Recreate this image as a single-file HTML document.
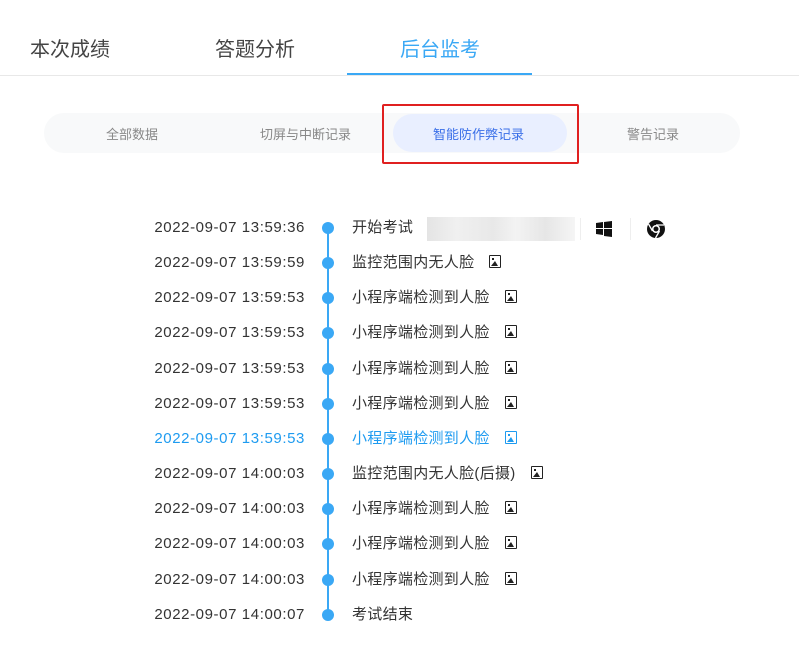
<!DOCTYPE html>
<html><head><meta charset="utf-8"><style>
body{margin:0;width:799px;height:646px;background:#fff;font-family:"Liberation Sans","Noto Sans CJK SC",sans-serif;position:relative;overflow:hidden}
.abs{position:absolute}
.tab{position:absolute;top:36px;font-size:20px;color:#444;line-height:28px}
.row{position:absolute;left:0;width:799px;height:20px;font-size:15px;color:#333;line-height:20px}
.row .t{position:absolute;right:494px;letter-spacing:0.6px}
.row .d{position:absolute;left:322px;top:4px;width:12px;height:12px;border-radius:50%;background:#3aa8f5}
.row .e{position:absolute;left:352px;letter-spacing:0.3px}
.ic{display:inline-block;width:12px;height:13px;border:1.5px solid #222;border-radius:1px;margin-left:15px;vertical-align:-1px;position:relative;box-sizing:border-box}
.ic:after{content:"";position:absolute;left:1px;bottom:1px;width:0;height:0;border-left:4px solid transparent;border-right:3px solid transparent;border-bottom:5px solid #222}
.ic:before{content:"";position:absolute;left:2px;top:2px;width:2px;height:2px;background:#222}
.hl{color:#1e9bf0}.hl .ic{border-color:#1e9bf0}.hl .ic:after{border-bottom-color:#1e9bf0}.hl .ic:before{background:#1e9bf0}
</style></head><body>
<div class="tab" style="left:30px">本次成绩</div>
<div class="tab" style="left:215px">答题分析</div>
<div class="tab" style="left:400px;color:#3aa8f5">后台监考</div>
<div class="abs" style="left:0;top:75px;width:799px;height:1px;background:#e8e8e8"></div>
<div class="abs" style="left:347px;top:73px;width:185px;height:2px;background:#3aa8f5"></div>
<div class="abs" style="left:44px;top:113px;width:696px;height:40px;border-radius:20px;background:#f8f9fa"></div>
<div class="abs" style="left:393px;top:114px;width:174px;height:38px;border-radius:19px;background:#e9efff"></div>
<div class="abs" style="left:382px;top:104px;width:193px;height:56px;border:2px solid #e02020;border-radius:2px"></div>
<div class="abs" style="left:106px;top:124px;font-size:13px;color:#888">全部数据</div>
<div class="abs" style="left:260px;top:124px;font-size:13px;color:#888">切屏与中断记录</div>
<div class="abs" style="left:433px;top:124px;font-size:13px;color:#3a6fe8">智能防作弊记录</div>
<div class="abs" style="left:627px;top:124px;font-size:13px;color:#888">警告记录</div>
<div class="abs" style="left:327px;top:228px;width:2px;height:387px;background:#3aa8f5"></div>
<div class="abs" style="left:427px;top:217px;width:148px;height:24px;background:linear-gradient(90deg,#e4e4e4,#f0f0f0 20%,#e8e8e8 45%,#f3f3f3 60%,#e6e6e6 80%,#f5f5f5)"></div>
<div class="abs" style="left:580px;top:218px;width:1px;height:22px;background:#eee"></div>
<div class="abs" style="left:630px;top:218px;width:1px;height:22px;background:#eee"></div>
<svg class="abs" style="left:595px;top:220px" width="18" height="18" viewBox="0 0 18 18"><path d="M1 3l7-1v6H1zM9 2l8-1v7H9zM1 9h7v6l-7-1zM9 9h8v8l-8-1z" fill="#111"/></svg>
<svg class="abs" style="left:646px;top:219px" width="20" height="20" viewBox="0 0 20 20"><circle cx="10" cy="10" r="9" fill="#111"/><circle cx="10" cy="10" r="4" fill="#fff"/><circle cx="10" cy="10" r="2.5" fill="#111"/><path d="M10 6h8M6.5 12L2.5 5M13.5 12L9.5 19" stroke="#fff" stroke-width="1.3"/></svg>
<div class="row" style="top:218px"><span class="t">2022-09-07 13:59:36</span><span class="d"></span><span class="e">开始考试</span></div>
<div class="row" style="top:253px"><span class="t">2022-09-07 13:59:59</span><span class="d"></span><span class="e">监控范围内无人脸<i class="ic"></i></span></div>
<div class="row" style="top:288px"><span class="t">2022-09-07 13:59:53</span><span class="d"></span><span class="e">小程序端检测到人脸<i class="ic"></i></span></div>
<div class="row" style="top:323px"><span class="t">2022-09-07 13:59:53</span><span class="d"></span><span class="e">小程序端检测到人脸<i class="ic"></i></span></div>
<div class="row" style="top:359px"><span class="t">2022-09-07 13:59:53</span><span class="d"></span><span class="e">小程序端检测到人脸<i class="ic"></i></span></div>
<div class="row" style="top:394px"><span class="t">2022-09-07 13:59:53</span><span class="d"></span><span class="e">小程序端检测到人脸<i class="ic"></i></span></div>
<div class="row hl" style="top:429px"><span class="t">2022-09-07 13:59:53</span><span class="d"></span><span class="e">小程序端检测到人脸<i class="ic"></i></span></div>
<div class="row" style="top:464px"><span class="t">2022-09-07 14:00:03</span><span class="d"></span><span class="e">监控范围内无人脸(后摄)<i class="ic"></i></span></div>
<div class="row" style="top:499px"><span class="t">2022-09-07 14:00:03</span><span class="d"></span><span class="e">小程序端检测到人脸<i class="ic"></i></span></div>
<div class="row" style="top:534px"><span class="t">2022-09-07 14:00:03</span><span class="d"></span><span class="e">小程序端检测到人脸<i class="ic"></i></span></div>
<div class="row" style="top:570px"><span class="t">2022-09-07 14:00:03</span><span class="d"></span><span class="e">小程序端检测到人脸<i class="ic"></i></span></div>
<div class="row" style="top:605px"><span class="t">2022-09-07 14:00:07</span><span class="d"></span><span class="e">考试结束</span></div>
</body></html>
